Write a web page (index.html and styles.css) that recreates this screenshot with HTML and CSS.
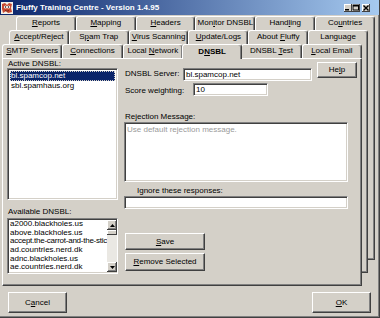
FILE: index.html
```html
<!DOCTYPE html>
<html>
<head>
<meta charset="utf-8">
<link rel="stylesheet" href="styles.css">
</head>
<body>
<div class="window">
  <div class="titlebar">
    <span class="appicon">
      <svg width="12" height="12" viewBox="0 0 12 12">
        <rect x="0" y="0" width="12" height="12" fill="#f4f0e8"/>
        <path d="M1 2 L4 1 L6 3 L8 1 L11 2 L10 6 L11 10 L7 11 L5 9 L2 11 L1 7 Z" fill="#c84830"/>
        <circle cx="4.5" cy="5" r="1.6" fill="#fff"/>
        <circle cx="7.5" cy="5" r="1.6" fill="#fff"/>
        <circle cx="4.5" cy="5" r="0.7" fill="#000"/>
        <circle cx="7.5" cy="5" r="0.7" fill="#000"/>
        <path d="M4 8.5 Q6 9.8 8 8.5" stroke="#5a1a10" stroke-width="0.8" fill="none"/>
      </svg>
    </span>
    <span class="title">Fluffy Training Centre - Version 1.4.95</span>
    <span class="winbtns">
      <span class="wb"><svg width="8" height="8" viewBox="0 0 8 8"><rect x="1" y="5" width="4" height="1.5" fill="#000"/></svg></span>
      <span class="wb"><svg width="8" height="8" viewBox="0 0 8 8"><rect x="1" y="1" width="5.5" height="5" fill="none" stroke="#000" stroke-width="1"/><rect x="1" y="1" width="5.5" height="1.5" fill="#000"/></svg></span>
      <span class="wb close"><svg width="8" height="8" viewBox="0 0 8 8"><path d="M1.5 1.5 L6.5 6.5 M6.5 1.5 L1.5 6.5" stroke="#000" stroke-width="1.4"/></svg></span>
    </span>
  </div>

  <div class="tabctl">
    <div class="sheet s1">
      <div class="tabrow">
        <div class="tab"><u>R</u>eports</div>
        <div class="tab"><u>M</u>apping</div>
        <div class="tab"><u>H</u>eaders</div>
        <div class="tab">Mon<u>i</u>tor DNSBL</div>
        <div class="tab">Hand<u>l</u>ing</div>
        <div class="tab">Co<u>u</u>ntries</div>
      </div>
      <div class="page back"></div>
    </div>
    <div class="sheet s2">
      <div class="tabrow">
        <div class="tab"><u>A</u>ccept/Reject</div>
        <div class="tab">S<u>p</u>am Trap</div>
        <div class="tab"><u>V</u>irus Scanning</div>
        <div class="tab"><u>U</u>pdate/Logs</div>
        <div class="tab">About <u>F</u>luffy</div>
        <div class="tab">Language</div>
      </div>
      <div class="page back"></div>
    </div>
    <div class="sheet s3">
      <div class="tabrow">
        <div class="tab"><u>S</u>MTP Servers</div>
        <div class="tab"><u>C</u>onnections</div>
        <div class="tab">Local <u>N</u>etwork</div>
        <div class="tab active">D<u>N</u>SBL</div>
        <div class="tab">DNSBL <u>T</u>est</div>
        <div class="tab"><u>L</u>ocal Email</div>
      </div>
      <div class="page front">
        <div class="leftcol">
          <div class="lbl">Active DNSBL:</div>
          <div class="list active-list sunken">
            <div class="items">
              <div class="item sel">bl.spamcop.net</div>
              <div class="item">sbl.spamhaus.org</div>
            </div>
          </div>
          <div class="lbl avail-lbl">Available DNSBL:</div>
          <div class="list avail-list sunken">
            <div class="items">
              <div class="item">a2000.blackholes.us</div>
              <div class="item">above.blackholes.us</div>
              <div class="item tight">accept.the-carrot-and-the-stic</div>
              <div class="item">ad.countries.nerd.dk</div>
              <div class="item">adnc.blackholes.us</div>
              <div class="item">ae.countries.nerd.dk</div>
            </div>
            <div class="vscroll">
              <div class="sbtn"><svg width="5" height="3" viewBox="0 0 5 3"><path d="M2.5 0 L5 3 L0 3 Z" fill="#000"/></svg></div>
              <div class="thumb"></div>
              <div class="track"></div>
              <div class="sbtn"><svg width="5" height="3" viewBox="0 0 5 3"><path d="M0 0 L5 0 L2.5 3 Z" fill="#000"/></svg></div>
            </div>
          </div>
        </div>
        <div class="rightcol">
          <div class="row r1">
            <div class="lbl l-server">DNSBL Server:</div>
            <div class="field f-server sunken">bl.spamcop.net</div>
            <div class="btn help">He<u>l</u>p</div>
          </div>
          <div class="row r2">
            <div class="lbl l-score">Score weighting:</div>
            <div class="field f-score sunken">10</div>
          </div>
          <div class="lbl l-rej">Rejection Message:</div>
          <div class="field memo sunken"><span class="ph">Use default rejection message.</span></div>
          <div class="lbl l-ign">Ignore these responses:</div>
          <div class="field f-ign sunken"></div>
          <div class="btn save"><u>S</u>ave</div>
          <div class="btn remove"><u>R</u>emove Selected</div>
        </div>
      </div>
    </div>
  </div>

  <div class="footer">
    <div class="btn big">C<u>a</u>ncel</div>
    <div class="btn big"><u>O</u>K</div>
  </div>
</div>
</body>
</html>
```

FILE: styles.css
```css
* { box-sizing: border-box; }
html, body { margin: 0; padding: 0; }
body {
  font-family: "Liberation Sans", Arial, sans-serif;
  font-size: 8px;
  color: #000;
  background: #d4d0c8;
}
u { text-decoration: underline; text-underline-offset: 1px; }

.window {
  width: 380px;
  height: 318px;
  background: #d4d0c8;
  border-right: 1px solid #404040;
  border-bottom: 1px solid #404040;
  box-shadow: inset -1px -1px #808080;
  display: flex;
  flex-direction: column;
  overflow: hidden;
}

.titlebar {
  height: 15px;
  flex: none;
  display: flex;
  align-items: center;
  background: linear-gradient(to right, #0a246a, #a6caf0);
  color: #fff;
  padding-left: 1px;
  padding-right: 9px;
}
.appicon { width: 12px; height: 12px; display: flex; margin-right: 3px; }
.title { font-weight: bold; font-size: 8px; line-height: 12px; flex: 1; white-space: nowrap; }
.winbtns { display: flex; align-items: center; }
.wb {
  width: 8px; height: 8px;
  background: #d4d0c8;
  display: flex;
  box-shadow: inset -1px -1px #404040, inset 1px 1px #fff;
}
.wb.close { margin-left: 2px; }

.tabctl {
  margin: 1px 0 0 2px;
  width: 373px;
  height: 271px;
  display: grid;
  flex: none;
}
.sheet {
  grid-area: 1 / 1;
  display: flex;
  flex-direction: column;
}
.s1 { margin-left: 14px; width: 359px; }
.s2 { margin-left: 7px; margin-top: 14px; width: 359px; }
.s3 { margin-left: 0; margin-top: 28px; width: 360px; }

.tabrow {
  height: 14px;
  display: flex;
  align-items: flex-end;
  flex: none;
}
.tab {
  flex: 1 1 0;
  height: 14px;
  background: #d4d0c8;
  border-top: 1px solid #fff;
  border-left: 1px solid #fff;
  border-right: 1px solid #404040;
  border-radius: 3px 3px 0 0;
  box-shadow: inset -1px 0 #808080;
  text-align: center;
  line-height: 12px;
  white-space: nowrap;
  overflow: hidden;
}
.tab.active {
  font-weight: bold;
  height: 15px;
  margin: 0 -1px -1px -1px;
  position: relative;
  z-index: 1;
  line-height: 13px;
}

.page {
  background: #d4d0c8;
  border-right: 1px solid #404040;
  border-bottom: 1px solid #404040;
  box-shadow: inset -1px -1px #808080;
}
.s1 .page { height: 230px; }
.s2 .page { height: 229px; }
.page.front {
  height: 228px;
  border-top: 1px solid #fff;
  border-left: 1px solid #fff;
  display: grid;
  grid-template-columns: 111px 233px;
  column-gap: 6px;
  padding: 0 0 0 4px;
  align-content: start;
}

.lbl { line-height: 9px; height: 9px; white-space: nowrap; }

.sunken {
  background: #fff;
  border: 1px solid;
  border-color: #808080 #fff #fff #808080;
  box-shadow: inset 1px 1px #404040, inset -1px -1px #d4d0c8;
}

.leftcol { display: flex; flex-direction: column; }
.leftcol > .lbl:first-child { margin-left: 1px; }
.list { display: flex; padding: 2px; overflow: hidden; }
.items { flex: 1; min-width: 0; overflow: hidden; }
.item { white-space: nowrap; overflow: hidden; }
.item.tight { letter-spacing: -0.25px; }
.active-list { height: 132px; }
.active-list .item { line-height: 10px; height: 10px; padding-left: 1px; }
.active-list .item.sel {
  background: #0a246a;
  color: #fff;
  outline: 1px dotted #d4d0c8;
  outline-offset: -1px;
}
.avail-lbl { margin-top: 7px; margin-left: 1px; }
.avail-list { height: 56px; margin-top: 2px; padding: 1px 0 1px 2px; }
.avail-list .item { line-height: 8.7px; height: 8.7px; }

.vscroll {
  width: 10px;
  display: flex;
  flex-direction: column;
  flex: none;
}
.sbtn {
  height: 10px;
  flex: none;
  background: #d4d0c8;
  display: flex;
  align-items: center;
  justify-content: center;
  box-shadow: inset -1px -1px #404040, inset 1px 1px #fff, inset -2px -2px #808080;
}
.thumb {
  height: 5px;
  flex: none;
  background: #d4d0c8;
  box-shadow: inset -1px -1px #404040, inset 1px 1px #fff;
}
.track {
  flex: 1;
  background-color: #eae8e3;
}

.rightcol { display: flex; flex-direction: column; }
.row { display: flex; align-items: flex-start; }
.r1 { height: 22px; }
.l-server { width: 58px; margin: 10px 0 0 1px; }
.field { height: 13px; line-height: 11px; padding-left: 2px; white-space: nowrap; overflow: hidden; }
.f-server { width: 129px; margin-top: 9px; }
.btn {
  background: #d4d0c8;
  border: 1px solid;
  border-color: #fff #404040 #404040 #fff;
  box-shadow: inset -1px -1px #808080;
  text-align: center;
  white-space: nowrap;
}
.help { width: 40px; height: 16px; line-height: 14px; margin: 3px 0 0 5px; }
.r2 { margin-top: 2px; }
.l-score { width: 68px; margin: 3px 0 0 1px; }
.f-score { width: 75px; }
.l-rej { margin: 16px 0 0 1px; }
.memo { width: 224px; height: 60px; margin-top: 1px; padding: 2px 2px; line-height: 9px; }
.ph { color: #9a9a9a; }
.l-ign { margin: 4px 0 0 13px; }
.f-ign { width: 224px; margin-top: 1px; }
.save { width: 80px; height: 17px; line-height: 15px; margin: 24px 0 0 1px; }
.remove { width: 80px; height: 18px; line-height: 16px; margin: 3px 0 0 1px; }

.footer {
  display: flex;
  justify-content: space-between;
  padding: 0 8px 0 8px;
  margin-top: 5px;
}
.btn.big {
  width: 59px;
  height: 21px;
  line-height: 19px;
  border-color: #fff #404040 #404040 #fff;
}
```
